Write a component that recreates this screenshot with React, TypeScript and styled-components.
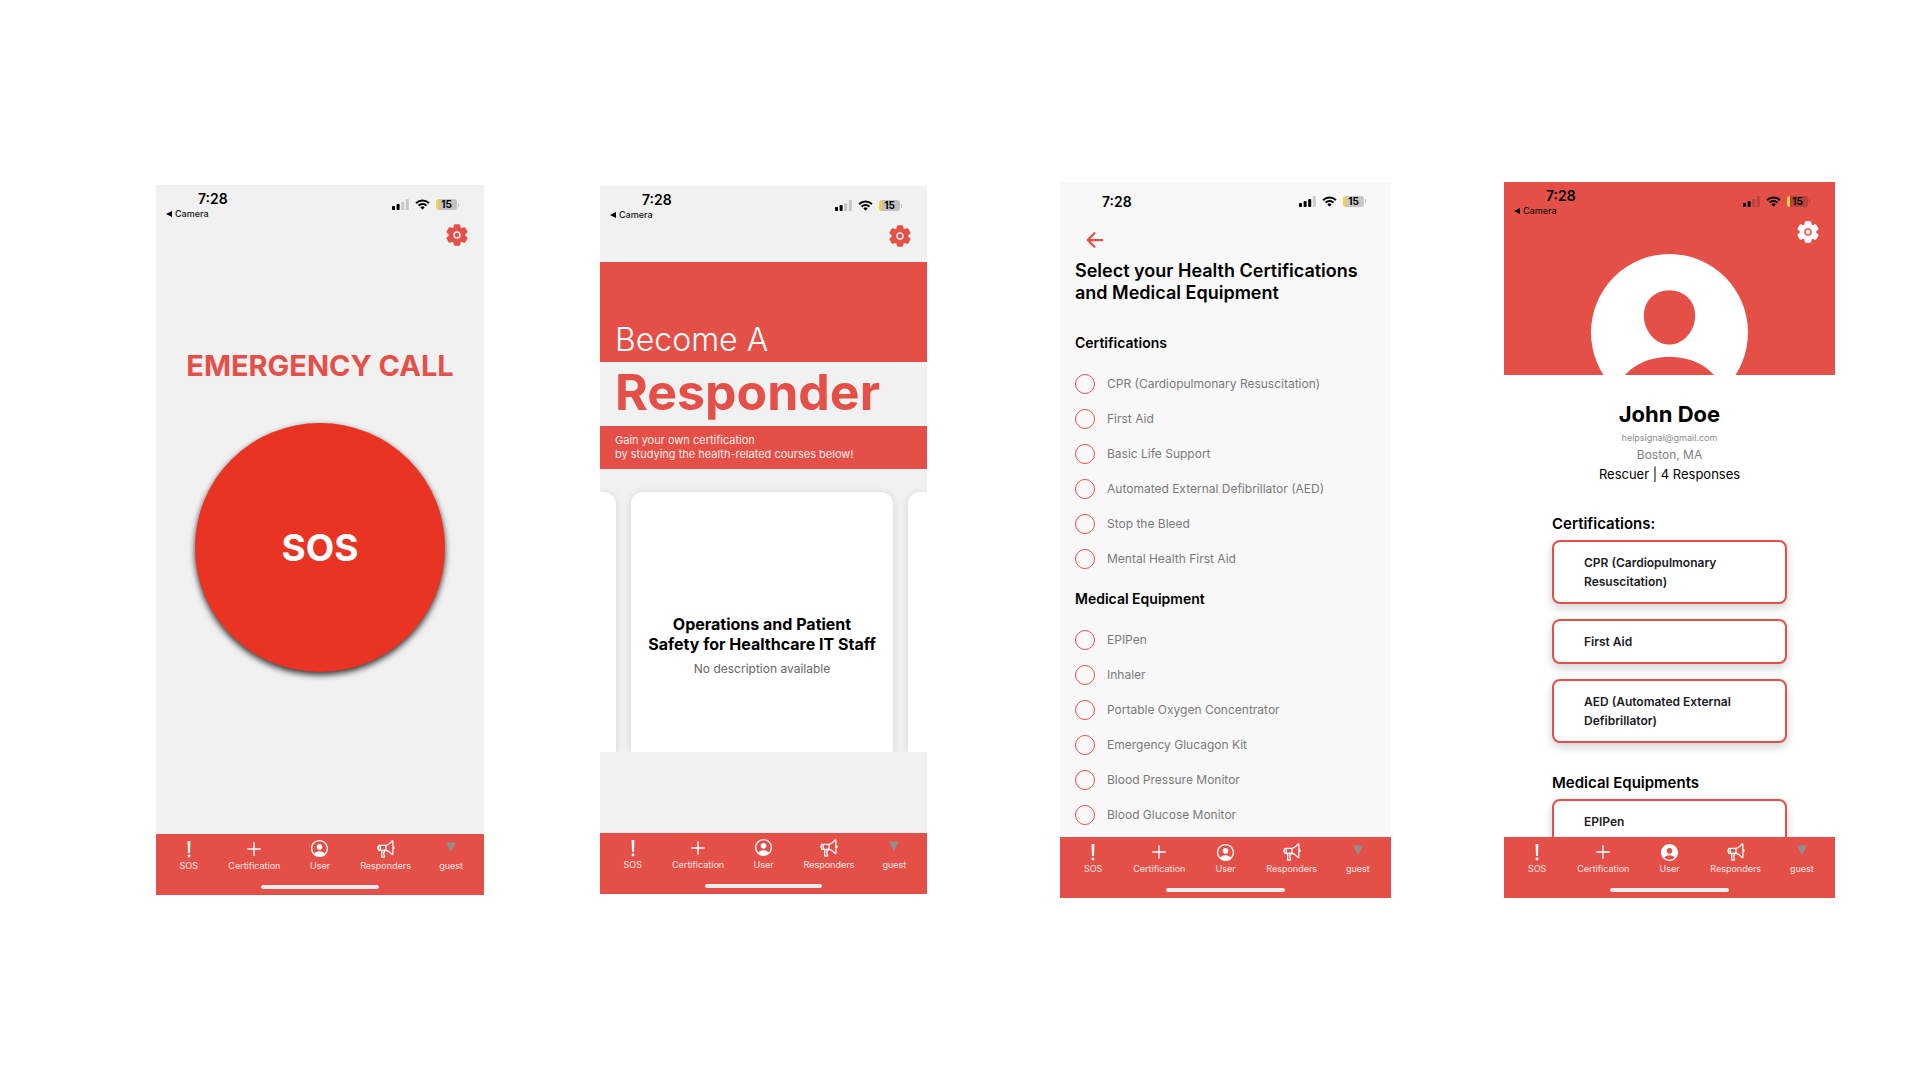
import React from "react";
import styled, { createGlobalStyle } from "styled-components";
import {
  IoArrowBack,
  IoMegaphoneOutline,
  IoPersonCircle,
  IoPersonCircleOutline,
  IoSettings,
} from "react-icons/io5";

const RED = "#e45048";
const GREY = "#f1f1f1";

const GlobalStyle = createGlobalStyle`
  *, *::before, *::after { box-sizing: border-box; }
  body {
    margin: 0;
    background: #fff;
    color: #000;
    font-family: Inter, "Liberation Sans", sans-serif;
  }
  h1, h2, h3, p, ul { margin: 0; padding: 0; }
  ul { list-style: none; }
  button { border: 0; padding: 0; background: none; font-family: inherit; cursor: pointer; }
`;

const Board = styled.main`
  min-height: 100vh;
  padding: 0 85px 0 156px;
  display: grid;
  grid-template-columns: 444fr 460fr 444fr 331fr;
  align-items: center;
`;

const Phone = styled.section<{ $width: number; $bg: string }>`
  width: ${(p) => p.$width}px;
  aspect-ratio: 1170 / 2532;
  background: ${(p) => p.$bg};
  display: flex;
  flex-direction: column;
  overflow: hidden;
`;

const Body = styled.div`
  flex: 1;
  min-height: 0;
  overflow: hidden;
  display: flex;
  flex-direction: column;
`;

/* ---------- status bar ---------- */

const StatusRow = styled.div`
  flex: none;
  height: 36px;
  padding: 0 25px 0 10px;
  display: flex;
  justify-content: space-between;
  align-items: flex-start;
`;

const Clock = styled.div<{ $low: boolean }>`
  padding-top: ${(p) => (p.$low ? 12 : 6)}px;
  display: flex;
  flex-direction: column;
  gap: 1px;
`;

const Time = styled.time`
  padding-left: 32px;
  font-size: 14px;
  font-weight: 600;
  line-height: 16px;
`;

const BackToApp = styled.a`
  display: flex;
  align-items: center;
  gap: 3px;
  color: #111;
  font-size: 9px;
  font-weight: 500;
  line-height: 12px;
  text-decoration: none;
`;

const Indicators = styled.div`
  padding-top: 14px;
  display: flex;
  align-items: center;
  gap: 6px;
`;

const Battery = styled.div`
  display: flex;
  align-items: center;
  gap: 1px;
`;

const BatteryCell = styled.span`
  width: 21px;
  height: 11px;
  border-radius: 3px;
  background: linear-gradient(90deg, #f7ce46 3px, rgba(0, 0, 0, 0.2) 3px);
  font-size: 10px;
  font-weight: 700;
  line-height: 11px;
  text-align: center;
`;

const BatteryTip = styled.span`
  width: 1px;
  height: 4px;
  background: rgba(0, 0, 0, 0.2);
`;

function StatusBar({ bars, back = true }: { bars: number; back?: boolean }) {
  return (
    <StatusRow>
      <Clock $low={!back}>
        <Time>7:28</Time>
        {back && (
          <BackToApp href="#camera">
            <svg width="6" height="6" viewBox="0 0 6 6" aria-hidden="true">
              <path d="M6 0v6L0 3z" />
            </svg>
            Camera
          </BackToApp>
        )}
      </Clock>
      <Indicators>
        <svg width="17" height="11" viewBox="0 0 17 11" aria-hidden="true">
          {[4, 6, 8, 11].map((h, i) => (
            <rect
              key={h}
              x={i * 4.6}
              y={11 - h}
              width="3"
              height={h}
              rx="0.8"
              fillOpacity={i < bars ? 1 : 0.18}
            />
          ))}
        </svg>
        <svg width="15" height="11" viewBox="0 0 17 12" aria-hidden="true">
          <path d="M8.5 2.6c2.4 0 4.6.9 6.2 2.5.1.1.3.1.4 0l1.2-1.2c.1-.1.1-.3 0-.4a11.2 11.2 0 0 0-15.6 0c-.1.1-.1.3 0 .4l1.2 1.2c.1.1.3.1.4 0A8.9 8.9 0 0 1 8.5 2.6zm0 3.9c1.3 0 2.6.5 3.5 1.4.1.1.3.1.4 0l1.2-1.2c.1-.1.1-.3 0-.4a7.4 7.4 0 0 0-10.2 0c-.1.1-.1.3 0 .4l1.2 1.2c.1.1.3.1.4 0A5.1 5.1 0 0 1 8.5 6.5zm2.3 2.6c.1.1.1.3 0 .4l-2.1 2.1c-.1.1-.3.1-.4 0L6.2 9.5c-.1-.1-.1-.3 0-.4a3.5 3.5 0 0 1 4.6 0z" />
        </svg>
        <Battery>
          <BatteryCell>15</BatteryCell>
          <BatteryTip />
        </Battery>
      </Indicators>
    </StatusRow>
  );
}

/* ---------- settings row ---------- */

const Toolbar = styled.div<{ $color: string; $height: number }>`
  flex: none;
  height: ${(p) => p.$height}px;
  padding: 2px 15px 0;
  display: flex;
  justify-content: flex-end;
  align-items: flex-start;
  color: ${(p) => p.$color};
`;

const IconButton = styled.button`
  display: flex;
  color: inherit;
`;

function SettingsBar({ color = RED, height = 40 }: { color?: string; height?: number }) {
  return (
    <Toolbar $color={color} $height={height}>
      <IconButton aria-label="Settings">
        <IoSettings size={24} />
      </IconButton>
    </Toolbar>
  );
}

/* ---------- tab bar ---------- */

const Tabs = styled.nav`
  flex: none;
  height: 61px;
  padding-top: 5px;
  background: ${RED};
  display: flex;
  flex-direction: column;
  align-items: center;
  gap: 13px;
`;

const TabList = styled.ul`
  width: 100%;
  display: grid;
  grid-template-columns: repeat(5, 1fr);
`;

const Tab = styled.a`
  display: flex;
  flex-direction: column;
  align-items: center;
  gap: 1px;
  color: #fff;
  font-size: 9px;
  line-height: 12px;
  text-decoration: none;
`;

const TabIcon = styled.span`
  height: 20px;
  display: flex;
  align-items: center;
`;

const TabLabel = styled.span`
  color: #fde6e4;
`;

const HomeIndicator = styled.span`
  width: 36%;
  height: 4px;
  border-radius: 2px;
  background: #ededed;
`;

const ExclamationIcon = () => (
  <svg width="6" height="18" viewBox="0 0 6 18" fill="currentColor" aria-hidden="true">
    <path d="M1.6 1h2.8L4 13H2z" />
    <circle cx="3" cy="16" r="1.4" />
  </svg>
);

const PlusIcon = () => (
  <svg width="14" height="14" viewBox="0 0 14 14" stroke="currentColor" strokeWidth="1.4" aria-hidden="true">
    <path d="M7 .3v13.4M.3 7h13.4" />
  </svg>
);

const TriangleIcon = () => (
  <svg width="10" height="14" viewBox="0 0 10 14" fill="#8f8f8f" aria-hidden="true">
    <path d="M.3.5h9.400L5 10.300z" />
  </svg>
);

function TabBar({ userActive = false }: { userActive?: boolean }) {
  const UserIcon = userActive ? IoPersonCircle : IoPersonCircleOutline;
  const tabs = [
    { label: "SOS", icon: <ExclamationIcon /> },
    { label: "Certification", icon: <PlusIcon /> },
    { label: "User", icon: <UserIcon size={21} /> },
    { label: "Responders", icon: <IoMegaphoneOutline size={20} /> },
    { label: "guest", icon: <TriangleIcon /> },
  ];
  return (
    <Tabs>
      <TabList>
        {tabs.map((tab) => (
          <li key={tab.label}>
            <Tab href={`#${tab.label.toLowerCase()}`}>
              <TabIcon>{tab.icon}</TabIcon>
              <TabLabel>{tab.label}</TabLabel>
            </Tab>
          </li>
        ))}
      </TabList>
      <HomeIndicator />
    </Tabs>
  );
}

/* ---------- emergency screen ---------- */

const Emergency = styled(Body)`
  padding-top: 87px;
  align-items: center;
  gap: 39px;
`;

const EmergencyTitle = styled.h1`
  color: ${RED};
  font-size: 29px;
  font-weight: 700;
  line-height: 36px;
`;

const SosButton = styled.button`
  width: 76%;
  aspect-ratio: 1;
  flex: none;
  border-radius: 50%;
  background: #e93423;
  box-shadow: 0 3px 6px rgba(0, 0, 0, 0.8);
  color: #fff;
  font-size: 37px;
  font-weight: 700;
`;

function EmergencyScreen() {
  return (
    <Phone $width={328} $bg={GREY}>
      <StatusBar bars={2} />
      <SettingsBar />
      <Emergency>
        <EmergencyTitle>EMERGENCY CALL</EmergencyTitle>
        <SosButton>SOS</SosButton>
      </Emergency>
      <TabBar />
    </Phone>
  );
}

/* ---------- become a responder screen ---------- */

const BannerTop = styled.p`
  flex: none;
  padding: 58px 15px 2px;
  background: ${RED};
  color: #fff;
  font-size: 32px;
  font-weight: 300;
  line-height: 40px;
`;

const BannerTitle = styled.h1`
  flex: none;
  padding: 0 15px 4px;
  color: ${RED};
  font-size: 50px;
  font-weight: 700;
  line-height: 60px;
`;

const BannerNote = styled.p`
  flex: none;
  padding: 7px 15px 8px;
  background: ${RED};
  color: #fdeceb;
  font-size: 11px;
  line-height: 14px;
`;

const Carousel = styled.div`
  height: 283px;
  padding-top: 23px;
  display: grid;
  grid-template-columns: 16px 1fr 19px;
  gap: 15px;
  overflow: hidden;
`;

const Card = styled.article<{ $corners: string }>`
  padding-top: 122px;
  border-radius: ${(p) => p.$corners};
  background: #fff;
  box-shadow: 0 1px 8px rgba(0, 0, 0, 0.12);
  text-align: center;
`;

const CardTitle = styled.h2`
  font-size: 16px;
  font-weight: 700;
  line-height: 20px;
`;

const CardText = styled.p`
  margin-top: 7px;
  color: #666;
  font-size: 12px;
  line-height: 16px;
`;

function ResponderScreen() {
  return (
    <Phone $width={327} $bg={GREY}>
      <StatusBar bars={2} />
      <SettingsBar />
      <Body>
        <BannerTop>Become A</BannerTop>
        <BannerTitle>Responder</BannerTitle>
        <BannerNote>
          Gain your own certification
          <br />
          by studying the health-related courses below!
        </BannerNote>
        <Carousel>
          <Card $corners="0 12px 0 0" />
          <Card $corners="12px 12px 0 0">
            <CardTitle>
              Operations and Patient
              <br />
              Safety for Healthcare IT Staff
            </CardTitle>
            <CardText>No description available</CardText>
          </Card>
          <Card $corners="12px 0 0 0" />
        </Carousel>
      </Body>
      <TabBar />
    </Phone>
  );
}

/* ---------- selection screen ---------- */

const BackRow = styled.div`
  height: 42px;
  padding: 2px 23px 0;
  display: flex;
  align-items: center;
  color: ${RED};
`;

const FormTitle = styled.h1`
  padding: 0 15px;
  font-size: 18px;
  font-weight: 600;
  line-height: 22px;
`;

const Group = styled.fieldset<{ $space: number }>`
  margin: ${(p) => p.$space}px 0 0;
  padding: 0 15px;
  border: 0;
`;

const GroupTitle = styled.legend`
  margin-bottom: 14px;
  padding: 0;
  font-size: 14px;
  font-weight: 600;
  line-height: 20px;
`;

const Option = styled.label`
  height: 35px;
  display: flex;
  align-items: center;
  gap: 12px;
  color: #7a7a7a;
  font-size: 12px;
  line-height: 16px;
`;

const Check = styled.input`
  appearance: none;
  width: 20px;
  height: 20px;
  margin: 0;
  border: 1px solid ${RED};
  border-radius: 50%;
  &:checked { background: ${RED}; }
`;

const CERTIFICATIONS = [
  "CPR (Cardiopulmonary Resuscitation)",
  "First Aid",
  "Basic Life Support",
  "Automated External Defibrillator (AED)",
  "Stop the Bleed",
  "Mental Health First Aid",
];

const EQUIPMENT = [
  "EPIPen",
  "Inhaler",
  "Portable Oxygen Concentrator",
  "Emergency Glucagon Kit",
  "Blood Pressure Monitor",
  "Blood Glucose Monitor",
];

function OptionGroup({ title, items, space }: { title: string; items: string[]; space: number }) {
  return (
    <Group $space={space}>
      <GroupTitle>{title}</GroupTitle>
      {items.map((item) => (
        <Option key={item}>
          <Check type="checkbox" />
          {item}
        </Option>
      ))}
    </Group>
  );
}

function SelectionScreen() {
  return (
    <Phone $width={331} $bg="#f8f8f8">
      <StatusBar bars={3} back={false} />
      <Body>
        <BackRow>
          <IconButton aria-label="Back">
            <IoArrowBack size={24} />
          </IconButton>
        </BackRow>
        <FormTitle>
          Select your Health Certifications
          <br />
          and Medical Equipment
        </FormTitle>
        <OptionGroup title="Certifications" items={CERTIFICATIONS} space={29} />
        <OptionGroup title="Medical Equipment" items={EQUIPMENT} space={12} />
      </Body>
      <TabBar />
    </Phone>
  );
}

/* ---------- profile screen ---------- */

const Hero = styled.header`
  flex: none;
  height: 193px;
  background: ${RED};
  overflow: hidden;
`;

const Avatar = styled.svg`
  display: block;
  width: 157px;
  height: 157px;
  margin: 0 auto;
  fill: #fff;
`;

const Identity = styled.div`
  padding-top: 25px;
  display: flex;
  flex-direction: column;
  align-items: center;
`;

const Name = styled.h1`
  margin-bottom: 2px;
  font-size: 22px;
  font-weight: 700;
  line-height: 28px;
`;

const Email = styled.a`
  color: #8c8c8c;
  font-size: 9px;
  line-height: 16px;
  text-decoration: none;
`;

const City = styled.p`
  color: #808080;
  font-size: 12px;
  line-height: 18px;
`;

const Role = styled.p`
  font-size: 13px;
  line-height: 20px;
`;

const ProfileSection = styled.section`
  flex: none;
  margin-top: 30px;
  padding: 0 48px;
`;

const SectionTitle = styled.h2`
  margin-bottom: 6px;
  font-size: 15px;
  font-weight: 600;
  line-height: 20px;
`;

const BadgeList = styled.ul`
  display: flex;
  flex-direction: column;
  gap: 15px;
`;

const BadgeItem = styled.li`
  padding: 11px 30px;
  border: 2px solid ${RED};
  border-radius: 8px;
  background: #fff;
  box-shadow: 0 4px 10px rgba(0, 0, 0, 0.18);
  color: #1a1a1f;
  font-size: 12px;
  font-weight: 600;
  line-height: 19px;
`;

function BadgeSection({ title, items }: { title: string; items: string[] }) {
  return (
    <ProfileSection>
      <SectionTitle>{title}</SectionTitle>
      <BadgeList>
        {items.map((item) => (
          <BadgeItem key={item}>{item}</BadgeItem>
        ))}
      </BadgeList>
    </ProfileSection>
  );
}

function ProfileScreen() {
  return (
    <Phone $width={331} $bg="#fff">
      <Hero>
        <StatusBar bars={2} />
        <SettingsBar color="#fff" height={36} />
        <Avatar viewBox="48 48 416 416" role="img" aria-label="Profile picture">
          <path
            fillRule="evenodd"
            d="M256 48a208 208 0 1 0 0 416 208 208 0 0 0 0-416zm0 96c19.7 0 37.4 7.4 50.1 20.9 12.9 13.7 19.2 32.1 17.7 51.9C320.8 256 290.5 288 256 288s-64.9-32-67.8-71.3c-1.5-19.9 4.8-38.3 17.6-51.9C218.4 151.4 236.3 144 256 144zm0 288a175.5 175.5 0 0 1-126-53.2 123 123 0 0 1 35.1-33.4C190.6 329 222.9 320 256 320s65.4 9 90.9 25.3a122.8 122.8 0 0 1 35.1 33.5A175.5 175.5 0 0 1 256 432z"
          />
        </Avatar>
      </Hero>
      <Body>
        <Identity>
          <Name>John Doe</Name>
          <Email href="mailto:helpsignal@gmail.com">helpsignal@gmail.com</Email>
          <City>Boston, MA</City>
          <Role>Rescuer | 4 Responses</Role>
        </Identity>
        <BadgeSection
          title="Certifications:"
          items={[
            "CPR (Cardiopulmonary Resuscitation)",
            "First Aid",
            "AED (Automated External Defibrillator)",
          ]}
        />
        <BadgeSection title="Medical Equipments" items={["EPIPen"]} />
      </Body>
      <TabBar userActive />
    </Phone>
  );
}

export default function App() {
  return (
    <>
      <GlobalStyle />
      <Board>
        <EmergencyScreen />
        <ResponderScreen />
        <SelectionScreen />
        <ProfileScreen />
      </Board>
    </>
  );
}
